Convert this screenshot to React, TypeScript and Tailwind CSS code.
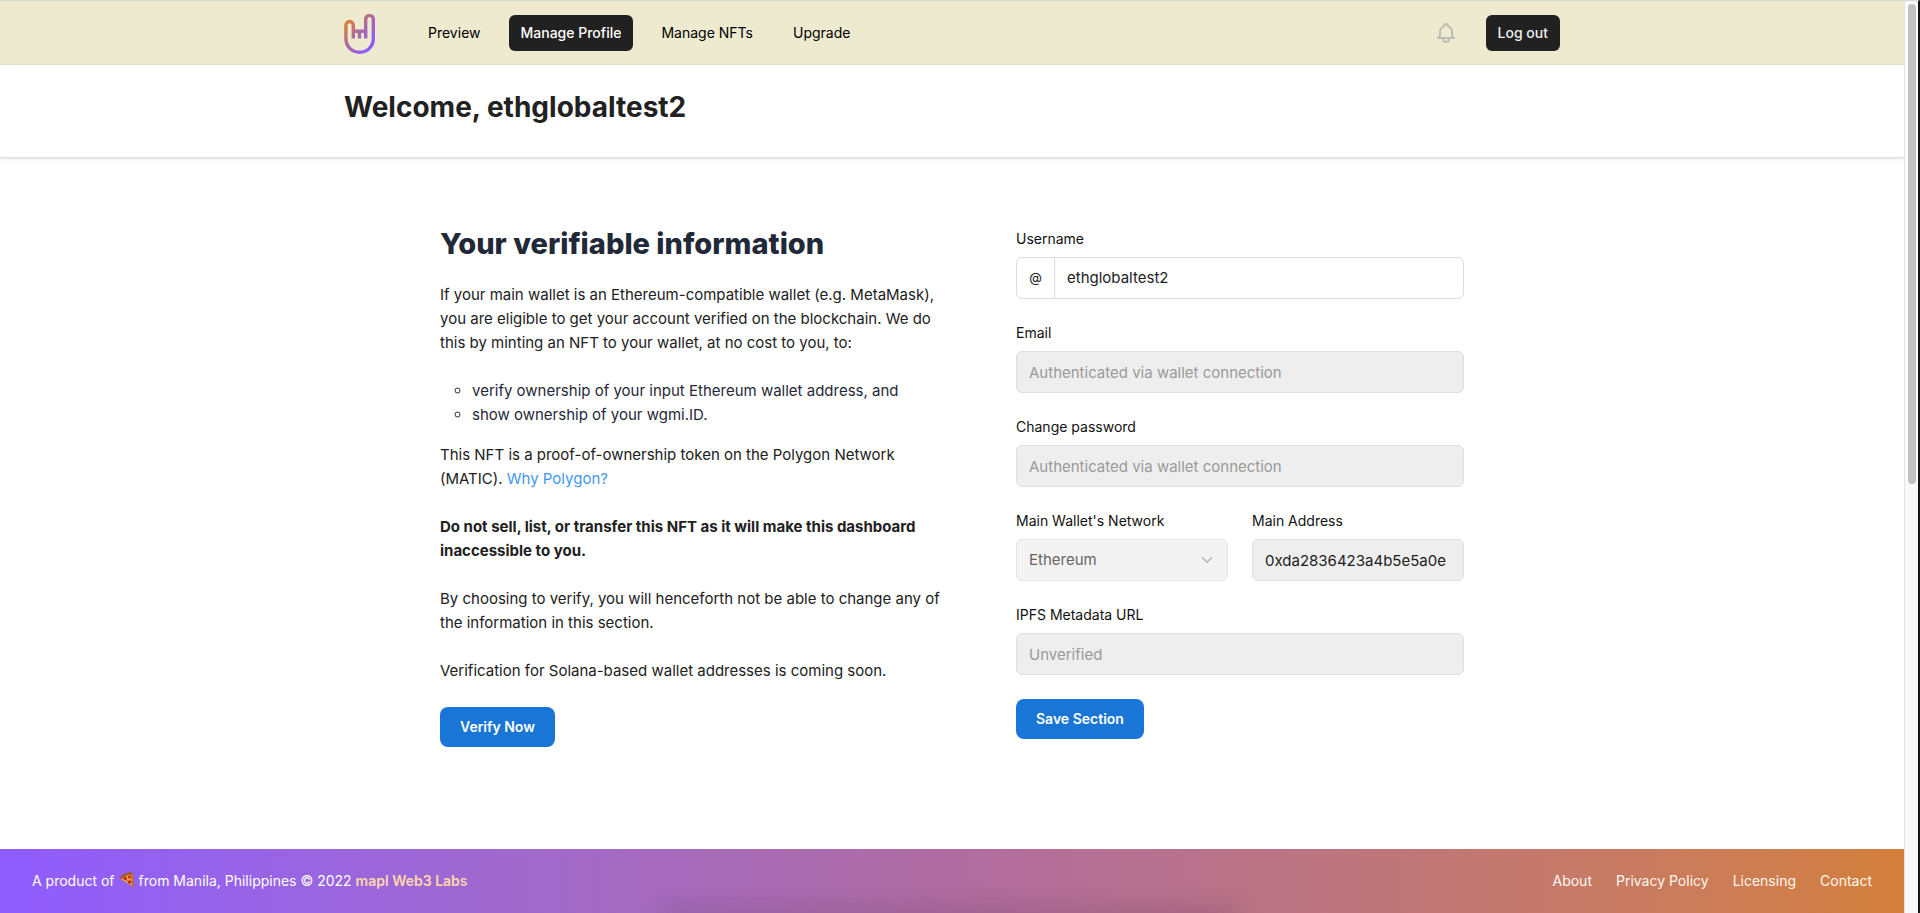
import React from "react";
import { ChevronDown } from "lucide-react";

const navItems = ["Preview", "Manage Profile", "Manage NFTs", "Upgrade"];
const footerLinks = ["About", "Privacy Policy", "Licensing", "Contact"];

const fieldClass =
  "block h-[42px] w-full min-w-0 rounded-md border border-[#dedede] bg-[#eeeeee] px-3 text-[15px] text-[#212121] placeholder:text-[#9a9a9a]";
const primaryButton =
  "h-10 rounded-lg bg-[#1976d6] px-5 text-sm font-semibold text-white";

function Logo() {
  return (
    <svg viewBox="0 0 32 42" className="h-[42px] w-8" fill="none" role="img" aria-label="wgmi">
      <defs>
        <linearGradient id="logo" x1="2" y1="12" x2="27" y2="33" gradientUnits="userSpaceOnUse">
          <stop offset="0" stopColor="#d5803a" />
          <stop offset="0.5" stopColor="#a868a8" />
          <stop offset="1" stopColor="#8f5cff" />
        </linearGradient>
      </defs>
      <g stroke="url(#logo)" strokeWidth="3.4" strokeLinecap="butt" strokeLinejoin="round">
        <path d="M9.3 26.5V13.2a3.7 3.7 0 0 0-7.4 0V26.5c0 8 6 13.8 13.7 13.8s13.7-5.800 13.7-13.8V7.200a3.8 3.8 0 0 0-7.6 0V26.500" />
        <path d="M9.3 19.3H21.7M15.500 19.300V26.500" />
      </g>
    </svg>
  );
}

function BellIcon() {
  return (
    <svg viewBox="0 0 24 24" className="size-6" fill="none" stroke="currentColor" strokeWidth="2" strokeLinecap="round" strokeLinejoin="round" aria-hidden="true">
      <path d="M15 17h5l-1.405-1.405A2.032 2.032 0 0118 14.158V11a6.002 6.002 0 00-4-5.659V5a2 2 0 10-4 0v.341C7.670 6.165 6 8.388 6 11v3.159c0 .538-.214 1.055-.595 1.436L4 17h5m6 0v1a3 3 0 11-6 0v-1m6 0H9" />
    </svg>
  );
}

function PizzaIcon() {
  return (
    <svg viewBox="0 0 16 18" className="mx-1 inline-block h-[18px] w-4 align-text-bottom" role="img" aria-label="pizza">
      <path d="M1 7.500 13 2.500 14 15.500Z" fill="#f0a03c" />
      <path d="M.8 7.300C3 3.400 8 .9 13 1.400l.6 2.400C9 3.300 5 5 2.300 8.300Z" fill="#a8571f" />
      <path d="M12.400 3.500 14.200 3.800 14.800 16.500 12.800 15.500Z" fill="#c06a24" />
      <circle cx="6.200" cy="7.500" r="1.700" fill="#c02c1c" />
      <circle cx="10.600" cy="6" r="1.600" fill="#c02c1c" />
      <circle cx="10.600" cy="11" r="1.700" fill="#b52818" />
      <circle cx="8.400" cy="9.600" r=".6" fill="#3c7a2a" />
    </svg>
  );
}

function Field({ id, label, children }: { id: string; label: string; children: React.ReactNode }) {
  return (
    <div className="flex min-w-0 flex-col gap-2">
      <label htmlFor={id} className="text-sm text-[#111111]">
        {label}
      </label>
      {children}
    </div>
  );
}

export default function App() {
  return (
    <div className="flex min-h-screen bg-white font-['Inter','Noto_Sans',sans-serif] text-[#212121]">
      <div className="flex min-w-0 flex-1 flex-col">
        <nav className="border-t border-b border-t-[#d8d8cc] border-b-[#e2e2d0] bg-[#eeead0]">
          <div className="mx-auto flex h-[63px] max-w-7xl items-center px-8">
            <a href="#home" className="mr-10">
              <Logo />
            </a>
            <div className="flex items-center gap-4">
              {navItems.map((item) => (
                <a
                  key={item}
                  href={"#" + item}
                  className={
                    item === "Manage Profile"
                      ? "flex h-9 items-center rounded-md bg-[#212121] px-3 text-sm font-medium text-white"
                      : "flex h-9 items-center px-3 text-sm text-black"
                  }
                >
                  {item}
                </a>
              ))}
            </div>
            <div className="ml-auto flex items-center gap-6">
              <button type="button" aria-label="Notifications" className="p-1 text-[#bdbdb2]">
                <BellIcon />
              </button>
              <button type="button" className="h-9 rounded-md bg-[#212121] px-3 text-sm font-medium text-[#eeeeee]">
                Log out
              </button>
            </div>
          </div>
        </nav>

        <header className="border-b border-[#e2e2e2] shadow-sm">
          <div className="mx-auto max-w-7xl px-8 pt-6 pb-8">
            <h1 className="text-[28px] leading-9 font-bold">Welcome, ethglobaltest2</h1>
          </div>
        </header>

        <main className="mx-auto grid w-full max-w-[1088px] flex-1 grid-cols-[minmax(0,1fr)_448px] items-start gap-14 px-8 pt-[71px] pb-24">
          <section className="flex flex-col items-start gap-6 text-[15px] leading-6">
            <h2 className="text-[29px] leading-[30px] font-extrabold text-[#1f2937]">Your verifiable information</h2>
            <p>
              If your main wallet is an Ethereum-compatible wallet (e.g. MetaMask),
              <br />
              you are eligible to get your account verified on the blockchain. We do
              <br />
              this by minting an NFT to your wallet, at no cost to you, to:
            </p>
            <div className="flex flex-col gap-4">
              <ul className="list-[circle] pl-8 text-[#1f2937]">
                <li>verify ownership of your input Ethereum wallet address, and</li>
                <li>show ownership of your wgmi.ID.</li>
              </ul>
              <p>
                This NFT is a proof-of-ownership token on the Polygon Network
                <br />
                (MATIC).{" "}
                <a href="#polygon" className="text-[#4299f0]">
                  Why Polygon?
                </a>
              </p>
            </div>
            <p className="font-bold">
              Do not sell, list, or transfer this NFT as it will make this dashboard
              <br />
              inaccessible to you.
            </p>
            <p>
              By choosing to verify, you will henceforth not be able to change any of
              <br />
              the information in this section.
            </p>
            <p>Verification for Solana-based wallet addresses is coming soon.</p>
            <button type="button" className={primaryButton}>
              Verify Now
            </button>
          </section>

          <form className="flex flex-col gap-6">
            <Field id="username" label="Username">
              <div className="flex h-[42px] rounded-md border border-[#dedede]">
                <span className="flex w-[38px] items-center justify-center border-r border-[#dedede] text-[13px]">@</span>
                <input id="username" defaultValue="ethglobaltest2" className="min-w-0 flex-1 rounded-r-md px-3 text-[15px]" />
              </div>
            </Field>
            <Field id="email" label="Email">
              <input id="email" type="email" disabled placeholder="Authenticated via wallet connection" className={fieldClass} />
            </Field>
            <Field id="password" label="Change password">
              <input id="password" type="password" disabled placeholder="Authenticated via wallet connection" className={fieldClass} />
            </Field>
            <div className="grid grid-cols-2 gap-6">
              <Field id="network" label="Main Wallet's Network">
                <div className="relative">
                  <select
                    id="network"
                    disabled
                    className="block h-[42px] w-full appearance-none rounded-md border border-[#e6e6e6] bg-[#f3f3f3] px-3 text-[15px] text-[#666666] opacity-100"
                  >
                    <option>Ethereum</option>
                  </select>
                  <ChevronDown className="pointer-events-none absolute top-3 right-3 size-[18px] text-[#b4b4b4]" strokeWidth={2} />
                </div>
              </Field>
              <Field id="address" label="Main Address">
                <input id="address" disabled defaultValue="0xda2836423a4b5e5a0e" className={fieldClass} />
              </Field>
            </div>
            <Field id="ipfs" label="IPFS Metadata URL">
              <input id="ipfs" disabled placeholder="Unverified" className={fieldClass} />
            </Field>
            <button type="button" className={primaryButton + " self-start"}>
              Save Section
            </button>
          </form>
        </main>

        <footer className="relative flex h-16 items-center justify-between overflow-hidden bg-linear-to-r from-[#8f5cff] via-[#b06ca0] to-[#d37f3a] px-8 text-sm text-white">
          <div className="absolute inset-x-[35%] -bottom-2 h-2 shadow-[0_0_24px_2px_rgba(60,40,60,0.3)]" />
          <p>
            A product of
            <PizzaIcon />
            from Manila, Philippines © 2022{" "}
            <a href="#mapl" className="font-semibold text-[#fed7aa]">
              mapl Web3 Labs
            </a>
          </p>
          <div className="flex gap-6 text-[#fff7ed]">
            {footerLinks.map((link) => (
              <a key={link} href={"#" + link}>
                {link}
              </a>
            ))}
          </div>
        </footer>
      </div>

      <div className="flex w-4 shrink-0 justify-center border-t border-r-2 border-l border-t-[#d8d8d8] border-r-[#161616] border-l-[#e4e4e4] bg-[#fafafa] pt-[3px]">
        <div className="h-[480px] w-2 rounded-full bg-[#c1c1c1]" />
      </div>
    </div>
  );
}
